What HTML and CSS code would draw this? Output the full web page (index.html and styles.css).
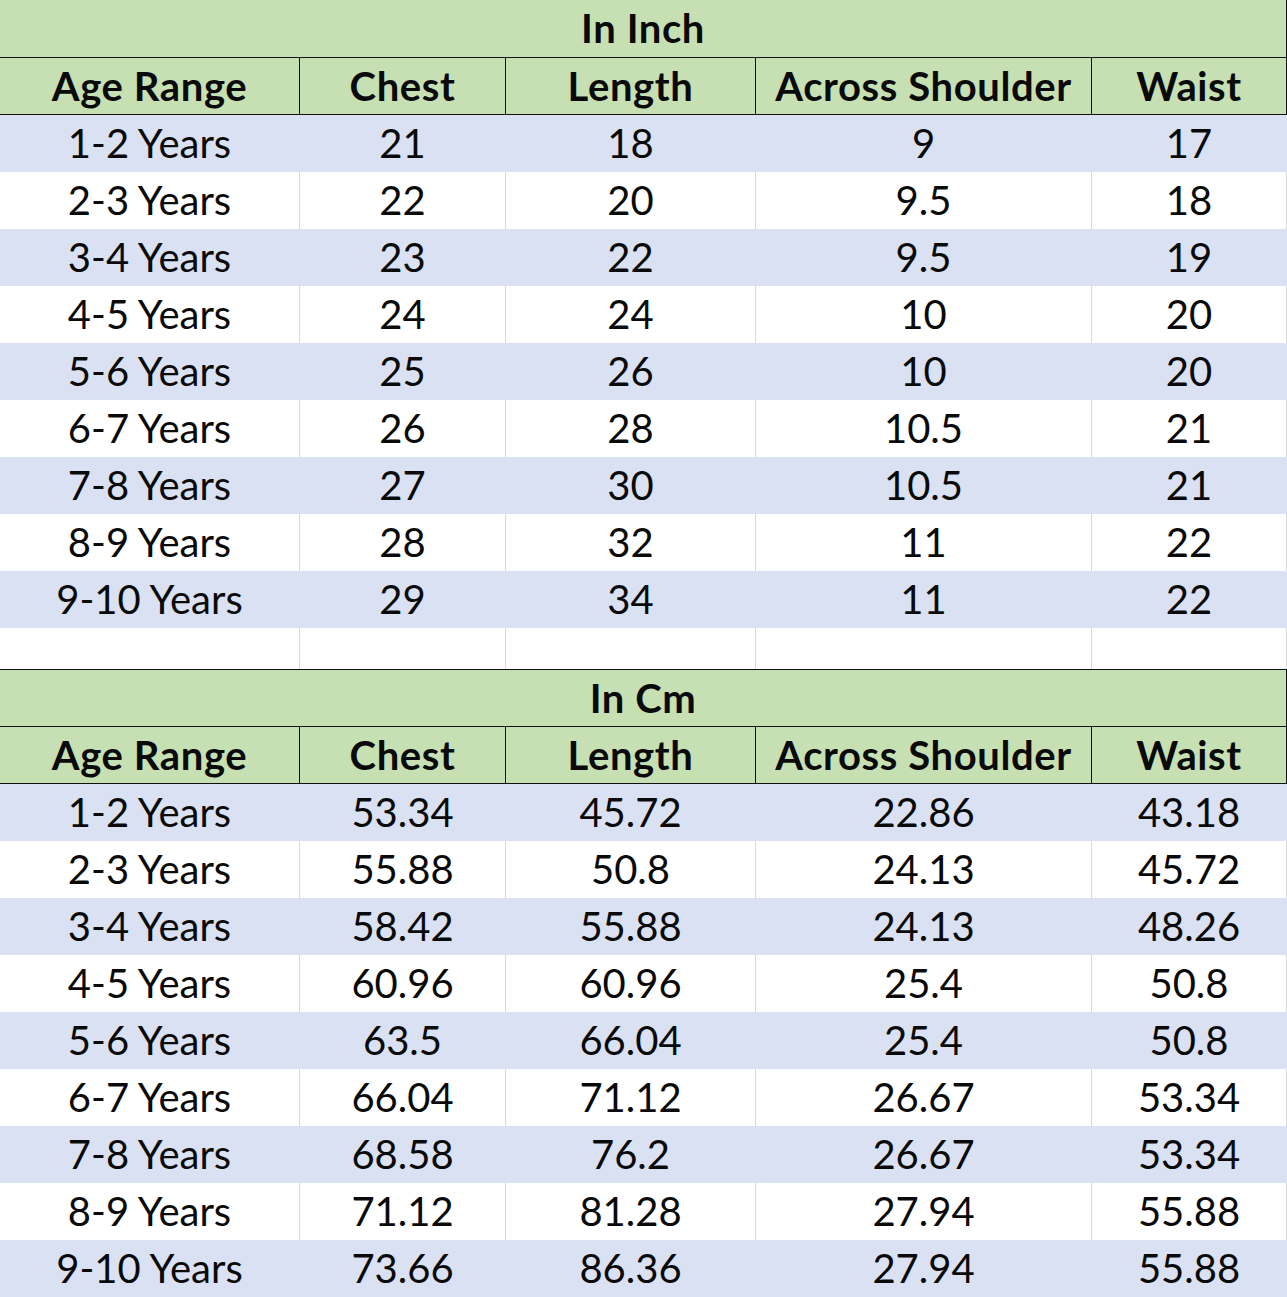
FILE: index.html
```html
<!DOCTYPE html>
<html>
<head>
<meta charset="utf-8">
<link rel="stylesheet" href="styles.css">
</head>
<body>
<div class="sheet">
  <section class="block">
    <div class="title">In Inch</div>
    <div class="row head"><div>Age Range</div><div>Chest</div><div>Length</div><div>Across Shoulder</div><div>Waist</div></div>
    <div class="row blue"><div>1-2 Years</div><div>21</div><div>18</div><div>9</div><div>17</div></div>
    <div class="row white"><div>2-3 Years</div><div>22</div><div>20</div><div>9.5</div><div>18</div></div>
    <div class="row blue"><div>3-4 Years</div><div>23</div><div>22</div><div>9.5</div><div>19</div></div>
    <div class="row white"><div>4-5 Years</div><div>24</div><div>24</div><div>10</div><div>20</div></div>
    <div class="row blue"><div>5-6 Years</div><div>25</div><div>26</div><div>10</div><div>20</div></div>
    <div class="row white"><div>6-7 Years</div><div>26</div><div>28</div><div>10.5</div><div>21</div></div>
    <div class="row blue"><div>7-8 Years</div><div>27</div><div>30</div><div>10.5</div><div>21</div></div>
    <div class="row white"><div>8-9 Years</div><div>28</div><div>32</div><div>11</div><div>22</div></div>
    <div class="row blue"><div>9-10 Years</div><div>29</div><div>34</div><div>11</div><div>22</div></div>
  </section>
  <div class="row white spacer"><div></div><div></div><div></div><div></div><div></div></div>
  <section class="block second">
    <div class="title">In Cm</div>
    <div class="row head"><div>Age Range</div><div>Chest</div><div>Length</div><div>Across Shoulder</div><div>Waist</div></div>
    <div class="row blue"><div>1-2 Years</div><div>53.34</div><div>45.72</div><div>22.86</div><div>43.18</div></div>
    <div class="row white"><div>2-3 Years</div><div>55.88</div><div>50.8</div><div>24.13</div><div>45.72</div></div>
    <div class="row blue"><div>3-4 Years</div><div>58.42</div><div>55.88</div><div>24.13</div><div>48.26</div></div>
    <div class="row white"><div>4-5 Years</div><div>60.96</div><div>60.96</div><div>25.4</div><div>50.8</div></div>
    <div class="row blue"><div>5-6 Years</div><div>63.5</div><div>66.04</div><div>25.4</div><div>50.8</div></div>
    <div class="row white"><div>6-7 Years</div><div>66.04</div><div>71.12</div><div>26.67</div><div>53.34</div></div>
    <div class="row blue"><div>7-8 Years</div><div>68.58</div><div>76.2</div><div>26.67</div><div>53.34</div></div>
    <div class="row white"><div>8-9 Years</div><div>71.12</div><div>81.28</div><div>27.94</div><div>55.88</div></div>
    <div class="row blue"><div>9-10 Years</div><div>73.66</div><div>86.36</div><div>27.94</div><div>55.88</div></div>
  </section>
</div>
</body>
</html>
```

FILE: styles.css
```css
html, body {
  margin: 0;
  padding: 0;
  background: #ffffff;
}

.sheet {
  width: 1287px;
  font-family: "Lato", "Open Sans", sans-serif;
  font-size: 40px;
  color: #0a0a0a;
}

.block {
  display: flex;
  flex-direction: column;
}

.title {
  height: 57px;
  line-height: 57px;
  text-align: center;
  font-weight: 700;
  letter-spacing: 0.6px;
  background: #c6e0b4;
  border-right: 1px solid #111;
  border-bottom: 1px solid #111;
}

.second .title {
  height: 56px;
  line-height: 56px;
  border-top: 1px solid #111;
}

.row {
  display: grid;
  grid-template-columns: 300px 206px 250px 336px 195px;
}

.row > div {
  height: 57px;
  line-height: 57px;
  text-align: center;
  white-space: nowrap;
  border-right: 1px solid transparent;
}

.head > div {
  height: 56px;
  line-height: 56px;
  font-weight: 700;
  letter-spacing: 0.6px;
  background: #c6e0b4;
  border-right-color: #111;
  border-bottom: 1px solid #111;
}

.blue > div {
  background: #d9e1f2;
}

.white > div {
  background: #ffffff;
  border-right-color: #d9d9d9;
}

.spacer > div {
  height: 41px;
  line-height: 41px;
}
```
